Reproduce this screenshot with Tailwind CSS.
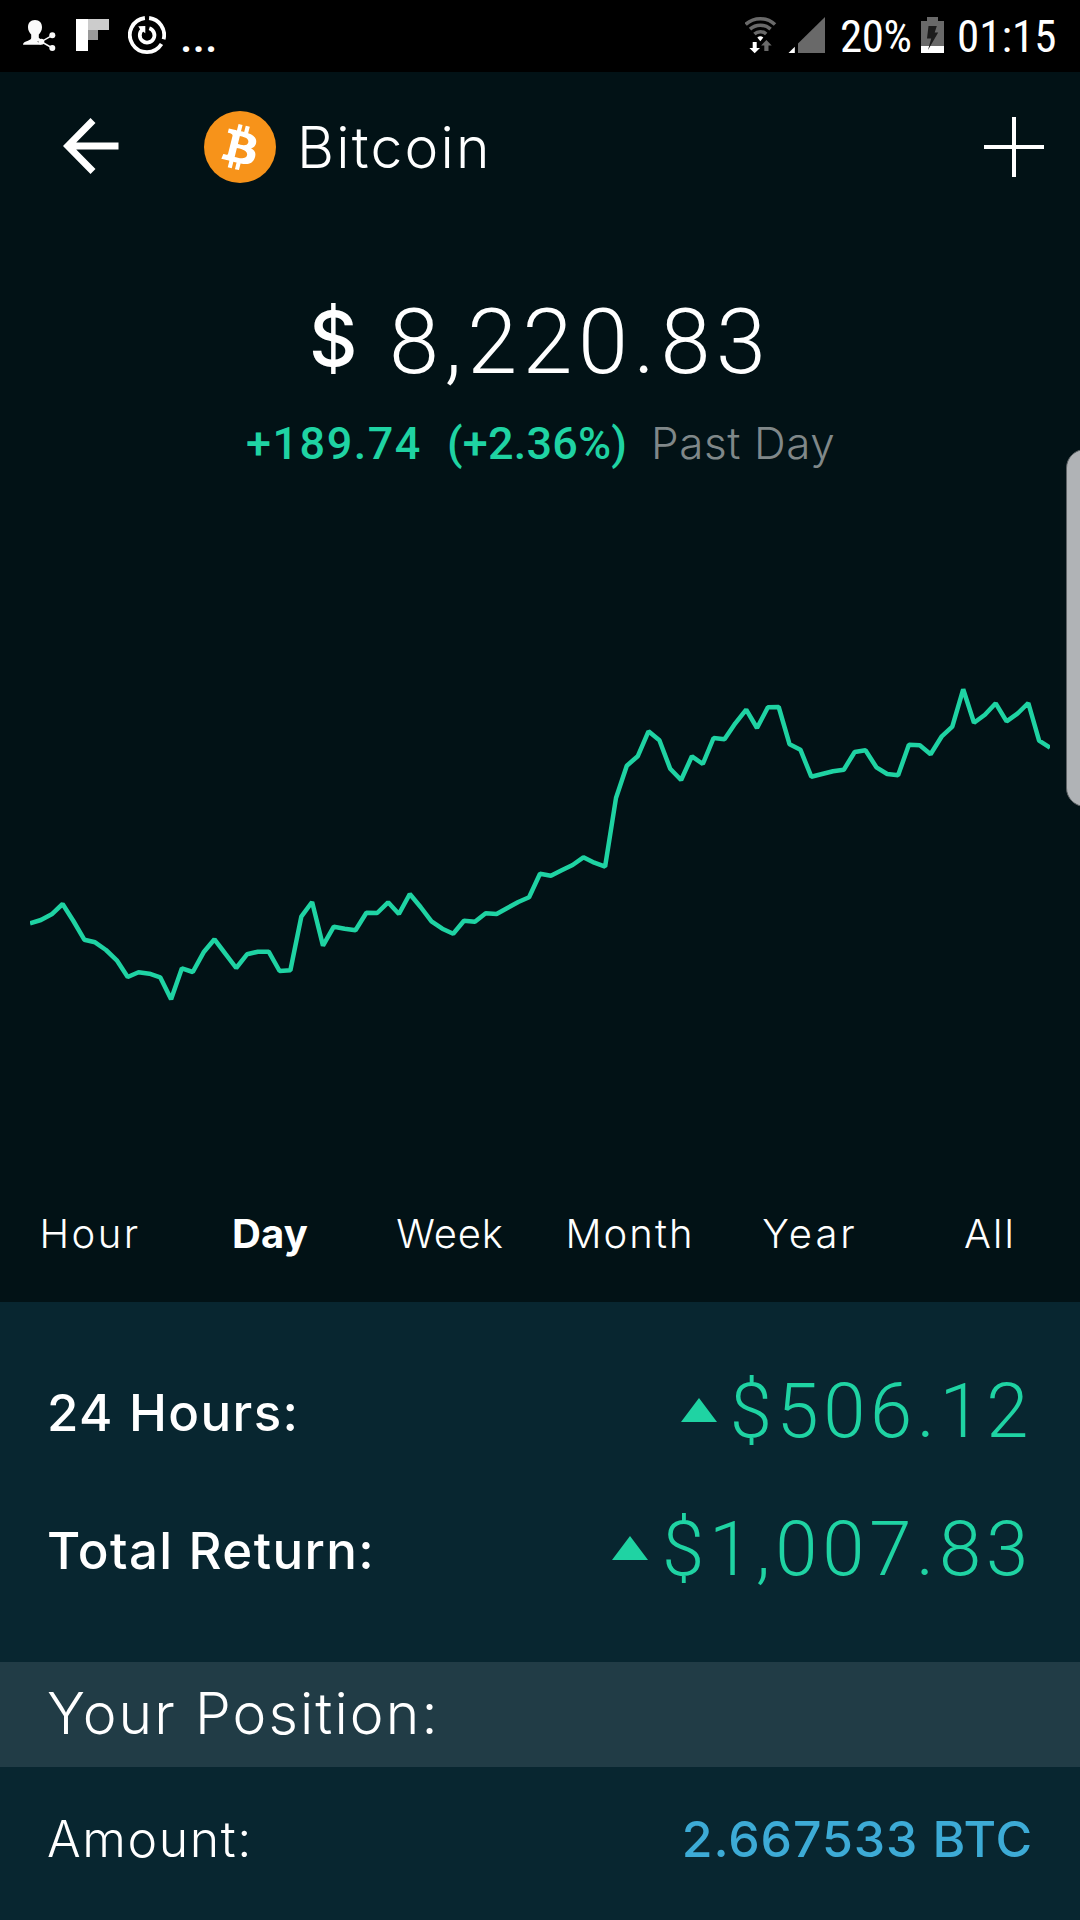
<!DOCTYPE html>
<html lang="en">
<head>
  <meta charset="UTF-8" />
  <meta name="viewport" content="width=device-width, initial-scale=1" />
  <title>Bitcoin</title>
  <script src="https://cdn.jsdelivr.net/npm/@tailwindcss/browser@4"></script>
</head>
<body class="bg-[#021216] text-white font-['Inter',sans-serif] leading-none">
<div class="relative w-[1080px] h-[1920px] overflow-hidden flex flex-col">

  <!-- Status bar -->
  <div class="h-[72px] shrink-0 bg-black flex items-center pl-[22px] pr-[22px]">
    <svg class="w-[34px] h-[72px]" viewBox="22 0 34 72" fill="#fafafa">
      <path d="M35 20c4.500 0 7 3 7 7.300 0 3-1.400 5.500-3.200 7.200v3.200l3 2.500-1 4.600H23c0-2.300 2-3.200 5-4.100 2-.7 3.200-1.400 3.200-2.600v-3.600c-1.800-1.700-3.200-4.200-3.200-7.200 0-4.300 2.500-7.300 7-7.300z" />
      <path d="M52.300 35.300L41.300 41.700L52.300 48" fill="none" stroke="#000" stroke-width="4" />
      <path d="M52.300 35.300L41.300 41.700L52.300 48" fill="none" stroke="#fafafa" stroke-width="1.500" />
      <circle cx="41.300" cy="41.700" r="3" /><circle cx="52.300" cy="35.300" r="3" /><circle cx="52.300" cy="48" r="3" />
    </svg>
    <svg class="ml-5 w-[34px] h-[72px]" viewBox="76 0 34 72" shape-rendering="crispEdges">
      <path d="M76 19h12v32h-12z" fill="#fff" />
      <path d="M88 19h21v11h-21z" fill="#ccc" />
      <path d="M88 30h10v10h-10z" fill="#999" />
    </svg>
    <svg class="ml-[18px] w-[38px] h-[72px]" viewBox="128 0 38 72" fill="none" stroke="#fff" stroke-width="3.800">
      <path d="M149.100 18A17.100 17.100 0 0 1 163.600 39.300" />
      <path d="M161.500 44A17.100 17.100 0 1 1 144.900 18" />
      <path d="M149.300 28.300A7.300 7.300 0 1 1 142.600 29.500" />
      <path d="M138.300 26.300L145.300 26V33.300L143 31.500L140.500 30z" fill="#fff" stroke="none" />
    </svg>
    <span class="ml-[14px] text-[45px] font-medium font-['Roboto',sans-serif]">...</span>

    <svg class="ml-auto w-[32px] h-[72px]" viewBox="745 0 32 72" fill="none">
      <g stroke="#696969" stroke-width="3.600">
        <path d="M745.600 24.500A21.500 21.500 0 0 1 775 24.500" />
        <path d="M750 29.200A15.300 15.300 0 0 1 770.600 29.200" />
        <path d="M754.400 34A9 9 0 0 1 766.200 34" />
      </g>
      <path d="M757.300 37.500Q760.300 35 763.300 37.500L760.300 41.200z" fill="#fff" />
      <path d="M752.700 42h4v6h3.300l-5.300 5.300-5.300-5.300h3.300z" fill="#fff" />
      <path d="M764.300 51h4.200v-5.500h3.200l-5.300-5.500-5.300 5.500h3.200z" fill="#696969" />
    </svg>
    <svg class="ml-[11px] w-[37px] h-[72px]" viewBox="788 0 37 72">
      <path d="M788.500 53h6.300v-6.300z" fill="#fff" />
      <path d="M798 53V43.500L825 17v36z" fill="#696969" />
    </svg>
    <span class="ml-[15px] w-[81px] text-[45px] tracking-[-0.5px] font-['Roboto_Condensed',sans-serif]">20%</span>
    <svg class="w-[23px] h-[72px]" viewBox="921 0 23 72">
      <path d="M927 17h11v4h6v32h-23v-32h6z" fill="#696969" />
      <path d="M921 46h23v7h-23z" fill="#fff" />
      <path d="M928.500 26h8.300l-2.100 6.500h3.500L928 50l3.200-11.500h-4.200z" fill="#1c1c1c" />
    </svg>
    <span class="ml-[13px] w-[101px] text-[45px] font-['Roboto_Condensed',sans-serif]">01:15</span>
  </div>

  <!-- Header -->
  <div class="h-[150px] shrink-0 flex items-center pl-[63px] pr-[36px]">
    <svg class="w-[56px] h-[56px] -mt-[2px]" viewBox="0 0 56 56" fill="none" stroke="#fff" stroke-width="7">
      <path d="M30 2.500L4.800 28L30 53.500M5 28H55.500" />
    </svg>
    <svg class="ml-[85px] w-[72px] h-[72px]" viewBox="0 0 32 32">
      <circle cx="16" cy="16" r="16" fill="#f7931a" />
      <path transform="translate(-.7 -.45) scale(1.030)" fill="#fff" d="M23.189 14.020c.314-2.096-1.283-3.223-3.465-3.975l.708-2.840-1.728-.43-.69 2.765c-.454-.114-.92-.22-1.385-.326l.695-2.783L15.596 6l-.708 2.839c-.376-.086-.746-.17-1.104-.26l.002-.009-2.384-.595-.46 1.846s1.283.294 1.256.312c.7.175.826.638.805 1.006l-.806 3.235c.048.012.11.03.18.057l-.183-.045-1.130 4.532c-.086.212-.303.531-.793.41.018.025-1.256-.313-1.256-.313l-.858 1.978 2.250.561c.418.105.828.215 1.231.318l-.715 2.872 1.727.43.708-2.840c.472.127.93.245 1.378.357l-.706 2.828 1.728.43.715-2.866c2.948.558 5.164.333 6.097-2.333.752-2.146-.037-3.385-1.588-4.192 1.130-.26 1.980-1.003 2.207-2.538zm-3.950 5.538c-.533 2.147-4.148.986-5.320.695l.95-3.805c1.172.293 4.929.872 4.370 3.110zm.535-5.569c-.487 1.953-3.495.96-4.470.717l.86-3.450c.975.243 4.118.696 3.610 2.733z" />
    </svg>
    <h1 class="ml-[21px] text-[57px] font-light tracking-[2.2px]">Bitcoin</h1>
    <svg class="ml-auto w-[60px] h-[60px]" viewBox="0 0 60 60" stroke="#fff" stroke-width="4">
      <path d="M30 0V60M0 30H60" />
    </svg>
  </div>

  <!-- Price -->
  <div class="mt-[76px] h-[90px] shrink-0 flex items-start pl-[309px] whitespace-nowrap">
    <span class="mt-[3px] w-[80px] text-[75px] font-medium">$</span>
    <span class="text-[90px] font-light font-['Roboto',sans-serif] tracking-[5.5px]">8,220.83</span>
  </div>
  <div class="mt-[33px] h-[45px] shrink-0 flex items-baseline pl-[246px] text-[45px] whitespace-nowrap">
    <span class="w-[201px] font-medium font-['Roboto',sans-serif] text-[#1fd3a3] tracking-[1.5px]">+189.74</span>
    <span class="w-[204px] font-medium font-['Roboto',sans-serif] text-[#1fd3a3] tracking-[0.2px]">(+2.36%)</span>
    <span class="text-[44px] font-light text-[#808889] tracking-[0.6px]">Past Day</span>
  </div>

  <!-- Chart -->
  <svg id="chart" class="mt-[194px] mx-[30px] w-[1020px] h-[360px] shrink-0" viewBox="0 0 1020 360">
    <polyline id="line" fill="none" stroke="#1fd3a3" stroke-width="4.500" stroke-linejoin="bevel" />
  </svg>

  <!-- Ranges -->
  <div class="mt-[194px] h-[41px] shrink-0 grid grid-cols-6 text-center text-[40px] font-light">
    <span class="tracking-[2.4px]">Hour</span>
    <span class="tracking-[0.2px] font-bold">Day</span>
    <span class="tracking-[0.9px]">Week</span>
    <span class="tracking-[2.1px]">Month</span>
    <span class="tracking-[3px]">Year</span>
    <span class="tracking-[2.1px]">All</span>
  </div>

  <!-- Returns -->
  <div class="mt-[47px] h-[360px] shrink-0 bg-[#082630] pt-[71px] pl-[47px] pr-[47px] flex flex-col gap-[62px]">
    <div class="h-[76px] flex items-center justify-between">
      <span class="mt-[3px] text-[51px] font-medium tracking-[1.4px]">24 Hours:</span>
      <div class="flex items-center gap-[13px] text-[#1fd3a3]">
        <svg class="-mt-[2px] w-[36px] h-[24px]" viewBox="0 0 36 24" fill="currentColor"><path d="M18 0L36 24H0z" /></svg>
        <span class="text-[76px] font-light font-['Roboto',sans-serif] tracking-[4.6px]">$506.12</span>
      </div>
    </div>
    <div class="h-[76px] flex items-center justify-between">
      <span class="mt-[3px] text-[51px] font-medium tracking-[1.4px]">Total Return:</span>
      <div class="flex items-center gap-[14px] text-[#1fd3a3]">
        <svg class="-mt-[2px] w-[36px] h-[24px]" viewBox="0 0 36 24" fill="currentColor"><path d="M18 0L36 24H0z" /></svg>
        <span class="text-[76px] font-light font-['Roboto',sans-serif] tracking-[4.8px]">$1,007.83</span>
      </div>
    </div>
  </div>

  <!-- Position -->
  <div class="h-[105px] shrink-0 bg-[#213c46] flex items-center pl-[47px]">
    <h2 class="-mt-[2px] text-[57px] font-light tracking-[2.1px]">Your Position:</h2>
  </div>
  <div class="grow bg-[#082630] pt-[47px] pl-[47px] pr-[47px] flex justify-between items-start text-[50px]">
    <span class="font-light tracking-[1.6px]">Amount:</span>
    <span class="font-medium text-[#3dabd6] tracking-[0.9px]">2.667533 BTC</span>
  </div>

  <!-- Edge panel handle -->
  <div class="absolute top-[449px] -right-6 w-[38px] h-[358px] rounded-[22px] bg-[#b0b3b6] border border-[#5d6265]"></div>
</div>

<script>
  // y of every sample in thirds of a pixel, evenly spaced over the width
  const samples = [
    790, 780, 763, 732, 783, 839, 847, 870, 901, 951, 937, 941, 952, 1018, 925, 936, 877, 838, 881,
    924, 883, 875, 875, 933, 931, 770, 726, 857, 800, 806, 811, 758, 759, 727, 762, 702, 741, 784,
    806, 821, 782, 785, 760, 762, 744, 726, 712, 641, 647, 631, 615, 592, 608, 620, 414, 317, 289,
    214, 241, 326, 360, 289, 312, 234, 238, 190, 149, 204, 142, 141, 253, 269, 350, 342, 334, 329,
    276, 271, 322, 342, 346, 254, 256, 283, 230, 200, 88, 188, 164, 130, 184, 161, 129, 242, 263
  ];
  const step = 1020 / (samples.length - 1);
  document.getElementById('line').setAttribute('points',
    samples.map((y, i) => (i * step).toFixed(1) + ',' + (y / 3).toFixed(1)).join(' '));
</script>
</body>
</html>
